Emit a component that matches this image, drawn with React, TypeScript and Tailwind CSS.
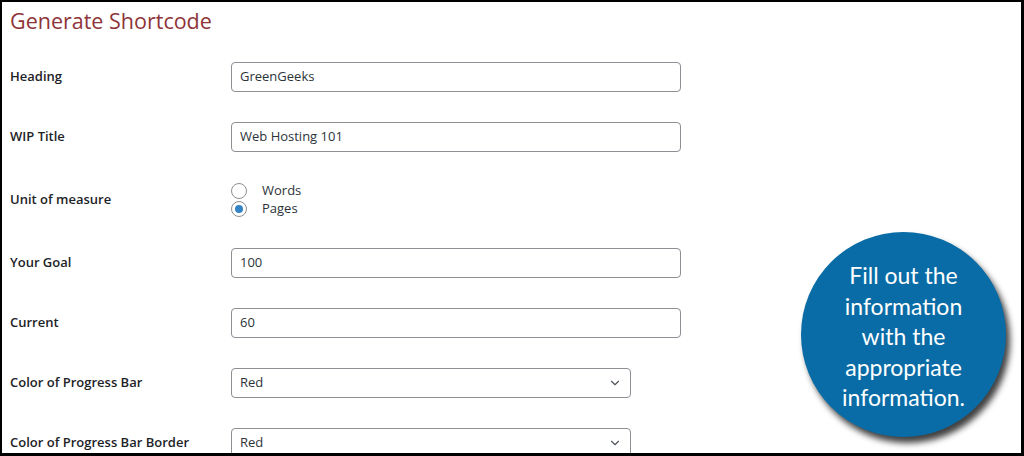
import { ChevronDown } from 'lucide-react';

type Row =
  | { kind: 'text'; label: string; value: string }
  | { kind: 'radio'; label: string; options: string[]; selected: string }
  | { kind: 'select'; label: string; value: string };

const rows: Row[] = [
  { kind: 'text', label: 'Heading', value: 'GreenGeeks' },
  { kind: 'text', label: 'WIP Title', value: 'Web Hosting 101' },
  { kind: 'radio', label: 'Unit of measure', options: ['Words', 'Pages'], selected: 'Pages' },
  { kind: 'text', label: 'Your Goal', value: '100' },
  { kind: 'text', label: 'Current', value: '60' },
  { kind: 'select', label: 'Color of Progress Bar', value: 'Red' },
  { kind: 'select', label: 'Color of Progress Bar Border', value: 'Red' },
];

const App = () => {
  return (
    <div
      className="relative h-[456px] w-[1024px] overflow-hidden border-t-2 border-l-2 border-r-[3px] border-b-[3px] border-black bg-white"
      style={{ fontFamily: '"Open Sans", "Noto Sans", sans-serif' }}
    >
      <div className="px-2 pt-[4px]">
        <h2 className="h-[30px] text-[21.5px] leading-[30px] font-normal text-[#8e3438]">Generate Shortcode</h2>

        <div className="mt-[11px] flex flex-col">
          {rows.map((row) => (
            <div key={row.label} className="flex items-center py-[15px]">
              <div className="w-[221px] shrink-0 text-[13px] font-semibold text-[#1d2327]">{row.label}</div>
              {row.kind === 'text' && (
                <div className="flex h-[30px] w-[450px] items-center rounded-[4px] border border-[#8c8f94] px-2 text-[13px] text-[#2c3338]">
                  {row.value}
                </div>
              )}
              {row.kind === 'select' && (
                <div className="flex h-[30px] w-[400px] items-center justify-between rounded-[4px] border border-[#8c8f94] pl-2 pr-[8px] text-[13px] text-[#2c3338]">
                  <span>{row.value}</span>
                  <ChevronDown size={14} strokeWidth={2} className="text-[#50575e]" />
                </div>
              )}
              {row.kind === 'radio' && (
                <div className="flex flex-col">
                  {row.options.map((opt) => (
                    <div key={opt} className="flex h-[18px] items-center gap-[15px] text-[13px] text-[#2c3338]">
                      <span className="flex h-4 w-4 items-center justify-center rounded-full border border-[#8c8f94] bg-white">
                        {opt === row.selected && <span className="h-2 w-2 rounded-full bg-[#3582c4]" />}
                      </span>
                      <span>{opt}</span>
                    </div>
                  ))}
                </div>
              )}
            </div>
          ))}
        </div>
      </div>

      <div
        className="absolute left-[799px] top-[230px] flex h-[205px] w-[205px] items-center justify-center rounded-full bg-[#0a6ca6] shadow-[4px_6px_6px_rgba(0,0,0,0.75)]"
      >
        <p
          className="mt-[4px] text-center text-[23px] leading-[30.5px] text-white"
          style={{ fontFamily: 'Lato, "Open Sans", sans-serif' }}
        >
          Fill out the
          <br />
          information
          <br />
          with the
          <br />
          appropriate
          <br />
          information.
        </p>
      </div>
    </div>
  );
};

export default App;
